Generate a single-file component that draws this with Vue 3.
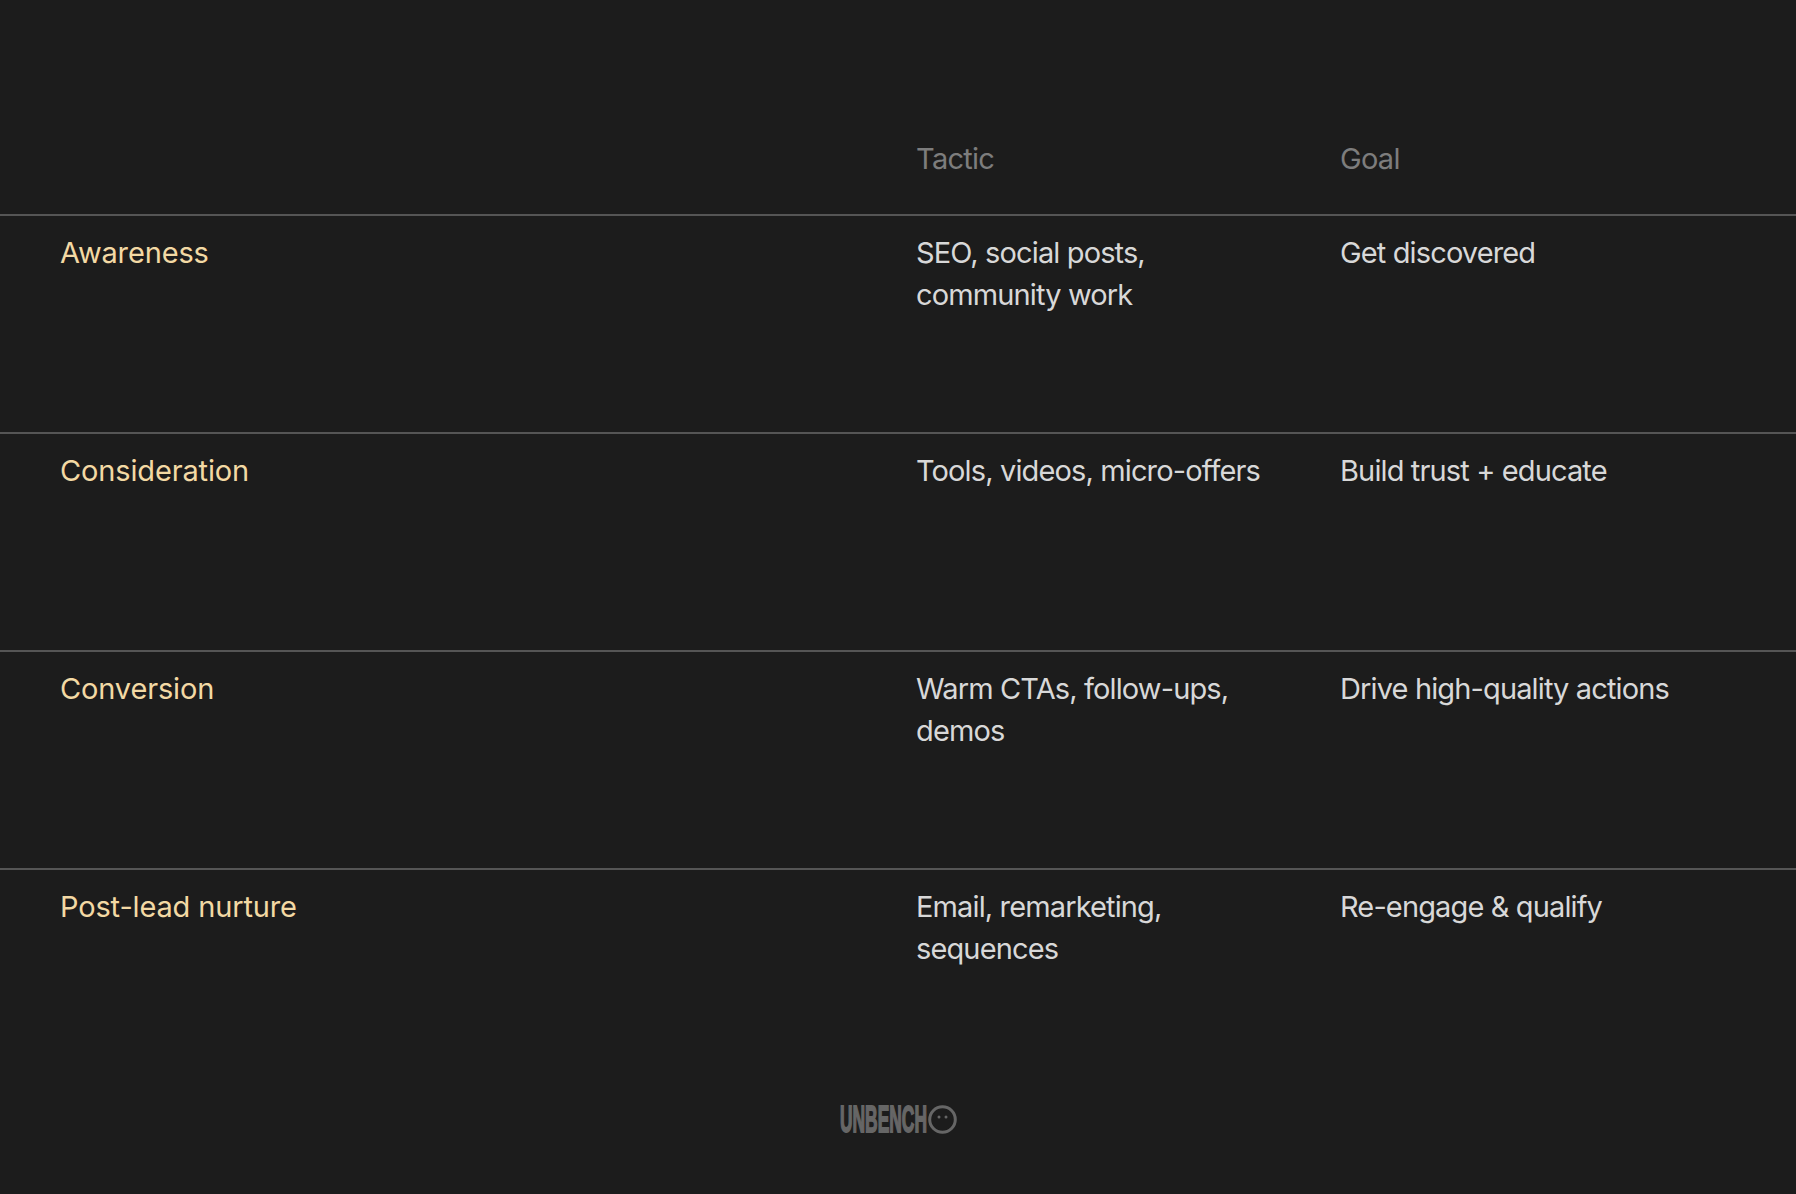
<script setup>
const rows = [
  { stage: 'Awareness', tactic: ['SEO, social posts,', 'community work'], goal: 'Get discovered' },
  { stage: 'Consideration', tactic: ['Tools, videos, micro-offers'], goal: 'Build trust + educate' },
  { stage: 'Conversion', tactic: ['Warm CTAs, follow-ups,', 'demos'], goal: 'Drive high-quality actions' },
  { stage: 'Post-lead nurture', tactic: ['Email, remarketing,', 'sequences'], goal: 'Re-engage & qualify' },
]
</script>

<template>
  <div class="page">
    <div class="table">
      <div class="head">
        <div></div>
        <div>Tactic</div>
        <div>Goal</div>
      </div>
      <div v-for="r in rows" :key="r.stage" class="row">
        <div class="stage">{{ r.stage }}</div>
        <div class="cell"><div v-for="l in r.tactic" :key="l">{{ l }}</div></div>
        <div class="cell">{{ r.goal }}</div>
      </div>
    </div>
    <div class="logo">
      <span class="word">UNBENCH</span>
      <svg width="29" height="29" viewBox="0 0 29 29" fill="none">
        <circle cx="14.5" cy="14.5" r="12.8" stroke="#666" stroke-width="3" />
        <circle cx="11" cy="12" r="1.5" fill="#666" />
        <circle cx="18" cy="12" r="1.5" fill="#666" />
      </svg>
    </div>
  </div>
</template>

<style>
html, body { margin: 0; background: #1c1c1c; }
</style>

<style scoped>
.page {
  width: 1796px;
  height: 1194px;
  background: #1c1c1c;
  font-family: Inter, "Liberation Sans", Arial, sans-serif;
  font-size: 29px;
  letter-spacing: -0.87px;
  line-height: 42px;
  overflow: hidden;
  display: flex;
  flex-direction: column;
}
.table { padding-top: 138px; }
.head, .row {
  display: grid;
  grid-template-columns: 916px 424px 1fr;
}
.head {
  height: 76px;
  color: #7d7d7d;
  letter-spacing: -0.72px;
}
.row {
  height: 218px;
  box-sizing: border-box;
  padding-top: 16px;
  border-top: 2px solid #555;
  color: #d8d8d8;
}
.stage {
  padding-left: 60px;
  color: #f3d9a4;
  letter-spacing: -0.15px;
}
.logo {
  display: flex;
  align-items: center;
  justify-content: center;
  gap: 2px;
  margin-top: 19px;
  color: #666;
}
.word {
  display: inline-block;
  width: 86px;
  white-space: nowrap;
  font-family: "Liberation Sans", Arial, sans-serif;
  font-weight: 700;
  font-size: 37px;
  line-height: 29px;
  letter-spacing: 0;
  -webkit-text-stroke: 1.8px #666;
  transform: scaleX(0.47);
  transform-origin: left center;
}
</style>
